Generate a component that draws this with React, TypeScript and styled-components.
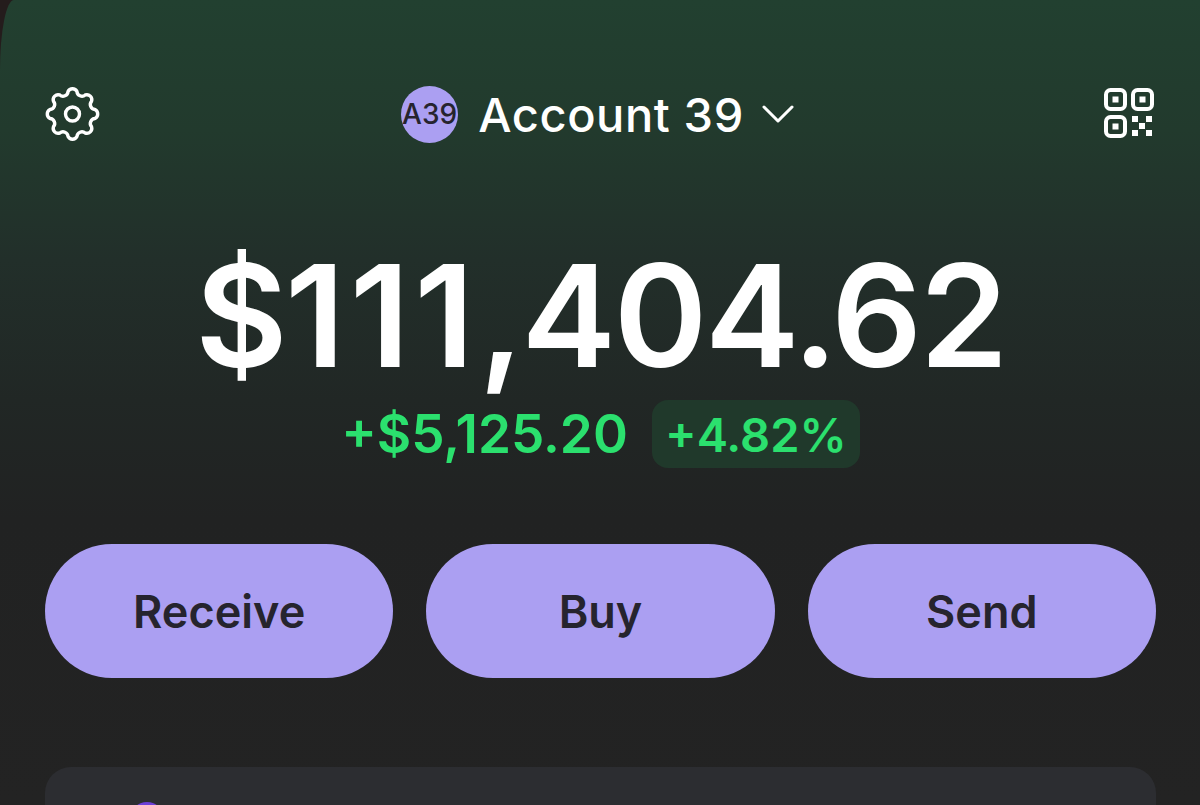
import React from 'react';
import styled, { createGlobalStyle } from 'styled-components';
import { ChevronDown } from 'lucide-react';

const GlobalStyle = createGlobalStyle`
  html, body {
    margin: 0;
    padding: 0;
    background: #241c1c;
  }
  body {
    font-family: Inter, "Liberation Sans", sans-serif;
  }
`;

const Screen = styled.main`
  width: 1200px;
  height: 805px;
  overflow: hidden;
  box-sizing: border-box;
  padding: 85px 44px 0 45px;
  border-top-left-radius: 14px 70px;
  background: linear-gradient(180deg, #224030 0px, #223a2d 130px, #222f2a 260px, #212725 400px, #212222 520px, #232323 805px);
`;

const Header = styled.header`
  display: flex;
  align-items: center;
  justify-content: space-between;
  height: 58px;
  color: #fff;
`;

const AccountSwitcher = styled.div`
  display: flex;
  align-items: center;
`;

const Avatar = styled.div`
  width: 57px;
  height: 57px;
  border-radius: 50%;
  background: #ab9ff2;
  color: #26242e;
  font-size: 28px;
  font-weight: 500;
  white-space: nowrap;
  display: flex;
  align-items: center;
  justify-content: center;
`;

const AccountName = styled.span`
  margin-left: 20px;
  margin-right: 6px;
  font-size: 47px;
  font-weight: 500;
  letter-spacing: 0.6px;
`;

const Balance = styled.div`
  margin-top: 100px;
  text-align: center;
  color: #fff;
  font-size: 142px;
  font-weight: 600;
  line-height: 144px;
  letter-spacing: -2.4px;
`;

const Ones = styled.span`
  letter-spacing: 4.5px;
`;

const ChangeRow = styled.div`
  display: flex;
  justify-content: center;
  align-items: center;
  gap: 24px;
  margin-top: 13px;
  color: #2be06e;
  font-size: 53px;
  font-weight: 600;
`;

const Percent = styled.span`
  width: 208px;
  height: 68px;
  box-sizing: border-box;
  background: #20392b;
  border-radius: 16px;
  font-size: 47px;
  display: flex;
  align-items: center;
  justify-content: center;
`;

const Actions = styled.div`
  display: grid;
  grid-template-columns: repeat(3, 1fr);
  gap: 33px;
  margin-top: 76px;
`;

const ActionButton = styled.button`
  height: 134px;
  border: none;
  border-radius: 67px;
  background: #ab9ff2;
  color: #26242e;
  font-family: inherit;
  font-size: 45px;
  font-weight: 600;
`;

const Card = styled.section`
  position: relative;
  margin-top: 89px;
  height: 120px;
  background: #2c2d31;
  border-radius: 26px;
`;

const CardDot = styled.span`
  position: absolute;
  top: 35px;
  left: 85px;
  width: 34px;
  height: 34px;
  border-radius: 50%;
  background: #6d3fd8;
`;

// eight bumps and eight dips, joined as alternating arcs round a circle
const gearPath = (() => {
  const pointAt = (i: number) => {
    const a = ((i + 0.5) / 16) * Math.PI * 2;
    const x = 27.5 + 22.9 * Math.sin(a);
    const y = 29 - 22.9 * Math.cos(a);
    return `${x.toFixed(2)} ${y.toFixed(2)}`;
  };
  let d = `M${pointAt(-1)}`;
  for (let i = 0; i < 16; i++) {
    const sweep = i % 2 === 0 ? 1 : 0;
    d += `A5 5 0 0 ${sweep} ${pointAt(i)}`;
  }
  return `${d}Z`;
})();

const GearIcon = () => (
  <svg width="58" height="58" viewBox="0 0 58 58" fill="none" stroke="#fff" strokeWidth="3.4">
    <path d={gearPath} strokeLinejoin="round" />
    <circle cx="27.5" cy="29" r="7" />
  </svg>
);

const QrIcon = () => (
  <svg width="52" height="52" viewBox="0 0 52 52" fill="none" stroke="#fff" strokeWidth="4">
    <rect x="2" y="2" width="19" height="19" rx="4.5" />
    <rect x="29" y="2" width="19" height="19" rx="4.5" />
    <rect x="2" y="29" width="19" height="19" rx="4.5" />
    <g fill="#fff" stroke="none">
      <rect x="8.5" y="8.5" width="6" height="6" />
      <rect x="35.5" y="8.5" width="6" height="6" />
      <rect x="8.5" y="35.5" width="6" height="6" />
      <rect x="28" y="28" width="6" height="6" />
      <rect x="42" y="28" width="6" height="6" />
      <rect x="35" y="35" width="6" height="6" />
      <rect x="28" y="42" width="6" height="6" />
      <rect x="42" y="42" width="6" height="6" />
    </g>
  </svg>
);

const App: React.FC = () => {
  return (
    <Screen>
      <GlobalStyle />
      <Header>
        <GearIcon />
        <AccountSwitcher>
          <Avatar>A39</Avatar>
          <AccountName>Account 39</AccountName>
          <ChevronDown size={56} color="#fff" strokeWidth={1.3} />
        </AccountSwitcher>
        <QrIcon />
      </Header>
      <Balance>
        $<Ones>111</Ones>,404.62
      </Balance>
      <ChangeRow>
        <span>+$5,125.20</span>
        <Percent>+4.82%</Percent>
      </ChangeRow>
      <Actions>
        <ActionButton>Receive</ActionButton>
        <ActionButton>Buy</ActionButton>
        <ActionButton>Send</ActionButton>
      </Actions>
      <Card>
        <CardDot />
      </Card>
    </Screen>
  );
};

export default App;
